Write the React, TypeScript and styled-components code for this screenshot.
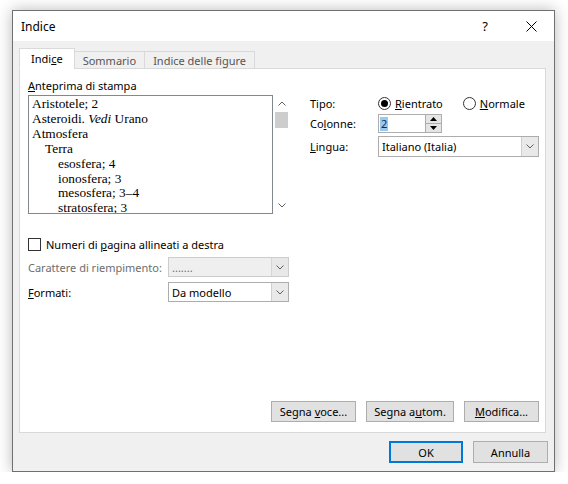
import React from "react";
import styled, { createGlobalStyle } from "styled-components";

const GlobalStyle = createGlobalStyle`
  html, body { margin: 0; padding: 0; background: #ffffff; }
  body {
    font-family: "Segoe UI", "Noto Sans", "Liberation Sans", sans-serif;
    font-size: 11px;
    color: #000;
  }
  * { box-sizing: border-box; }
`;

const Window = styled.div`
  width: 543px;
  height: 462px;
  margin: 10px 0 0 12px;
  border: 1px solid #707070;
  background: #f0f0f0;
  box-shadow: 0 0 14px rgba(0, 0, 0, 0.28);
  display: flex;
  flex-direction: column;
`;

const TitleBar = styled.div`
  height: 30px;
  background: #fff;
  display: flex;
  align-items: center;
  padding-left: 8px;
`;

const Title = styled.span`
  flex: 1;
  font-size: 12px;
`;

const CaptionButton = styled.div`
  width: 46px;
  height: 30px;
  display: flex;
  align-items: center;
  justify-content: center;
  font-size: 13px;
`;

const Body = styled.div`
  flex: 1;
  padding: 8px 6px 0 6px;
  display: flex;
  flex-direction: column;
`;

const TabRow = styled.div`
  display: flex;
  align-items: flex-end;
  height: 20px;
  margin-bottom: -1px;
  position: relative;
  z-index: 1;
`;

const Tab = styled.div<{ $active?: boolean }>`
  height: ${(p) => (p.$active ? 21 : 18)}px;
  padding: 0 ${(p) => (p.$active ? 11 : 8)}px;
  margin-left: ${(p) => (p.$active ? 0 : -1)}px;
  display: flex;
  align-items: center;
  border: 1px solid #d9d9d9;
  border-bottom: 1px solid ${(p) => (p.$active ? "#ffffff" : "#d9d9d9")};
  background: ${(p) => (p.$active ? "#ffffff" : "#f0f0f0")};
  color: ${(p) => (p.$active ? "#000" : "#555")};
  padding-top: ${(p) => (p.$active ? 0 : 1)}px;
  &:first-child { margin-left: 0; }
`;

const Panel = styled.div`
  width: 527px;
  height: 365px;
  border: 1px solid #d9d9d9;
  background: #fff;
  display: flex;
  flex-direction: column;
  padding: 9px 6px 10px 8px;
`;

const TopGrid = styled.div`
  display: grid;
  grid-template-columns: 262px 1fr;
  column-gap: 20px;
`;

const Column = styled.div`
  display: flex;
  flex-direction: column;
`;

const Key = styled.span`
  text-decoration: underline;
`;

const SectionLabel = styled.div`
  line-height: 15px;
  height: 15px;
`;

const PreviewRow = styled.div`
  display: flex;
  margin-top: 2px;
`;

const PreviewBox = styled.div`
  width: 245px;
  height: 119px;
  border: 1px solid #828790;
  padding: 1px 0 0 3px;
  overflow: hidden;
  font-family: "Liberation Serif", "Times New Roman", serif;
  font-size: 13.33px;
  line-height: 14.9px;
`;

const Entry = styled.div<{ $level: number }>`
  padding-left: ${(p) => p.$level * 13}px;
  white-space: nowrap;
`;

const ScrollBar = styled.div`
  width: 17px;
  height: 119px;
  display: flex;
  flex-direction: column;
  background: #fff;
`;

const ScrollArrow = styled.div`
  height: 17px;
  display: flex;
  align-items: center;
  justify-content: center;
`;

const ScrollThumb = styled.div`
  height: 16px;
  margin: 0 2px;
  background: #cdcdcd;
`;

const Spacer = styled.div`
  flex: 1;
`;

const CheckRow = styled.div`
  display: flex;
  align-items: center;
  gap: 5px;
  height: 14px;
  margin-top: 23px;
`;

const CheckBox = styled.div`
  width: 13px;
  height: 13px;
  border: 1px solid #333;
  background: #fff;
`;

const FieldRow = styled.div<{ $gap: number }>`
  display: grid;
  grid-template-columns: 140px 121px;
  align-items: center;
  margin-top: ${(p) => p.$gap}px;
`;

const FieldLabel = styled.div<{ $disabled?: boolean }>`
  color: ${(p) => (p.$disabled ? "#6d6d6d" : "#000")};
`;

const Combo = styled.div<{ $disabled?: boolean; $h?: number }>`
  height: ${(p) => p.$h ?? 20}px;
  display: flex;
  border: 1px solid ${(p) => (p.$disabled ? "#cccccc" : "#adadad")};
  background: ${(p) => (p.$disabled ? "#efefef" : "#ffffff")};
  color: ${(p) => (p.$disabled ? "#6d6d6d" : "#000")};
`;

const ComboText = styled.div`
  flex: 1;
  display: flex;
  align-items: center;
  padding-left: 3px;
`;

const ComboButton = styled.div<{ $disabled?: boolean }>`
  width: 17px;
  border-left: 1px solid ${(p) => (p.$disabled ? "#d6d6d6" : "#cfcfcf")};
  background: ${(p) => (p.$disabled ? "#e8e8e8" : "#e9e9e9")};
  display: flex;
  align-items: center;
  justify-content: center;
`;

const RightGrid = styled.div`
  display: grid;
  grid-template-columns: 68px 1fr;
  grid-template-rows: 16px 19px 21px;
  row-gap: 3px;
  align-items: center;
  margin-top: 17px;
`;

const RadioGroup = styled.div`
  display: flex;
  align-items: center;
  gap: 20px;
`;

const RadioOption = styled.div`
  display: flex;
  align-items: center;
  gap: 4px;
`;

const Radio = styled.div<{ $checked?: boolean }>`
  width: 13px;
  height: 13px;
  border-radius: 50%;
  border: 1px solid #333;
  background: #fff;
  display: flex;
  align-items: center;
  justify-content: center;
  &::after {
    content: "";
    width: 7px;
    height: 7px;
    border-radius: 50%;
    background: ${(p) => (p.$checked ? "#000" : "transparent")};
  }
`;

const Spin = styled.div`
  width: 64px;
  height: 19px;
  border: 1px solid #adadad;
  display: flex;
  background: #fff;
`;

const SpinValue = styled.div`
  flex: 1;
  display: flex;
  align-items: center;
  padding-left: 1px;
`;

const Selected = styled.span`
  background: #99c9ef;
  color: #0b2a5c;
  padding: 0 1px;
  line-height: 14px;
`;

const SpinButtons = styled.div`
  width: 16px;
  display: flex;
  flex-direction: column;
  border-left: 1px solid #adadad;
`;

const SpinButton = styled.div`
  flex: 1;
  background: #e5e5e5;
  display: flex;
  align-items: center;
  justify-content: center;
  & + & { border-top: 1px solid #adadad; }
`;

const ActionRow = styled.div`
  margin-top: auto;
  display: flex;
  justify-content: flex-end;
  gap: 10px;
`;

const Button = styled.div<{ $w: number; $h?: number; $default?: boolean }>`
  width: ${(p) => p.$w}px;
  height: ${(p) => p.$h ?? 21}px;
  display: flex;
  align-items: center;
  justify-content: center;
  background: #e1e1e1;
  border: ${(p) => (p.$default ? "2px solid #0078d7" : "1px solid #adadad")};
  white-space: nowrap;
`;

const Footer = styled.div`
  display: flex;
  justify-content: flex-end;
  gap: 10px;
  padding-top: 8px;
`;

const Chevron = ({ up }: { up?: boolean }) => (
  <svg width="8" height="5" viewBox="0 0 8 5">
    <polyline
      points={up ? "0.5,4.5 4,1 7.5,4.5" : "0.5,0.5 4,4 7.5,0.5"}
      fill="none"
      stroke="#606060"
      strokeWidth="1"
    />
  </svg>
);

const Triangle = ({ up }: { up?: boolean }) => (
  <svg width="7" height="4" viewBox="0 0 7 4">
    <polygon points={up ? "0,4 3.5,0 7,4" : "0,0 3.5,4 7,0"} fill="#000" />
  </svg>
);

const entries: { level: number; text: React.ReactNode }[] = [
  { level: 0, text: "Aristotele; 2" },
  { level: 0, text: <>Asteroidi. <i>Vedi</i> Urano</> },
  { level: 0, text: "Atmosfera" },
  { level: 1, text: "Terra" },
  { level: 2, text: "esosfera; 4" },
  { level: 2, text: "ionosfera; 3" },
  { level: 2, text: "mesosfera; 3\u20134" },
  { level: 2, text: "stratosfera; 3" },
];

export default function App() {
  return (
    <>
      <GlobalStyle />
      <Window>
        <TitleBar>
          <Title>Indice</Title>
          <CaptionButton>?</CaptionButton>
          <CaptionButton>
            <svg width="11" height="11" viewBox="0 0 11 11">
              <path d="M0.5 0.5 L10.5 10.5 M10.5 0.5 L0.5 10.5" stroke="#000" strokeWidth="1" />
            </svg>
          </CaptionButton>
        </TitleBar>
        <Body>
          <TabRow>
            <Tab $active>
              <span>
                Indi<Key>c</Key>e
              </span>
            </Tab>
            <Tab>Sommario</Tab>
            <Tab>Indice delle figure</Tab>
          </TabRow>
          <Panel>
            <TopGrid>
              <Column>
                <SectionLabel>
                  <Key>A</Key>nteprima di stampa
                </SectionLabel>
                <PreviewRow>
                  <PreviewBox>
                    {entries.map((e, i) => (
                      <Entry key={i} $level={e.level}>
                        {e.text}
                      </Entry>
                    ))}
                  </PreviewBox>
                  <ScrollBar>
                    <ScrollArrow>
                      <Chevron up />
                    </ScrollArrow>
                    <ScrollThumb />
                    <Spacer />
                    <ScrollArrow>
                      <Chevron />
                    </ScrollArrow>
                  </ScrollBar>
                </PreviewRow>
                <CheckRow>
                  <CheckBox />
                  <span>
                    Numeri di <Key>p</Key>agina allineati a destra
                  </span>
                </CheckRow>
                <FieldRow $gap={6}>
                  <FieldLabel $disabled>Carattere di riempimento:</FieldLabel>
                  <Combo $disabled>
                    <ComboText>.......</ComboText>
                    <ComboButton $disabled>
                      <Chevron />
                    </ComboButton>
                  </Combo>
                </FieldRow>
                <FieldRow $gap={5}>
                  <FieldLabel>
                    <Key>F</Key>ormati:
                  </FieldLabel>
                  <Combo>
                    <ComboText>Da modello</ComboText>
                    <ComboButton>
                      <Chevron />
                    </ComboButton>
                  </Combo>
                </FieldRow>
              </Column>
              <RightGrid>
                <FieldLabel>Tipo:</FieldLabel>
                <RadioGroup>
                  <RadioOption>
                    <Radio $checked />
                    <span>
                      <Key>R</Key>ientrato
                    </span>
                  </RadioOption>
                  <RadioOption>
                    <Radio />
                    <span>
                      <Key>N</Key>ormale
                    </span>
                  </RadioOption>
                </RadioGroup>
                <FieldLabel>
                  Co<Key>l</Key>onne:
                </FieldLabel>
                <Spin>
                  <SpinValue>
                    <Selected>2</Selected>
                  </SpinValue>
                  <SpinButtons>
                    <SpinButton>
                      <Triangle up />
                    </SpinButton>
                    <SpinButton>
                      <Triangle />
                    </SpinButton>
                  </SpinButtons>
                </Spin>
                <FieldLabel>
                  <Key>L</Key>ingua:
                </FieldLabel>
                <Combo $h={21}>
                  <ComboText>Italiano (Italia)</ComboText>
                  <ComboButton>
                    <Chevron />
                  </ComboButton>
                </Combo>
              </RightGrid>
            </TopGrid>
            <ActionRow>
              <Button $w={85}>
                <span>
                  Segna <Key>v</Key>oce...
                </span>
              </Button>
              <Button $w={88}>
                <span>
                  Segna a<Key>u</Key>tom.
                </span>
              </Button>
              <Button $w={75}>
                <span>
                  <Key>M</Key>odifica...
                </span>
              </Button>
            </ActionRow>
          </Panel>
          <Footer>
            <Button $w={74} $h={22} $default>
              OK
            </Button>
            <Button $w={75} $h={22}>
              Annulla
            </Button>
          </Footer>
        </Body>
      </Window>
    </>
  );
}
